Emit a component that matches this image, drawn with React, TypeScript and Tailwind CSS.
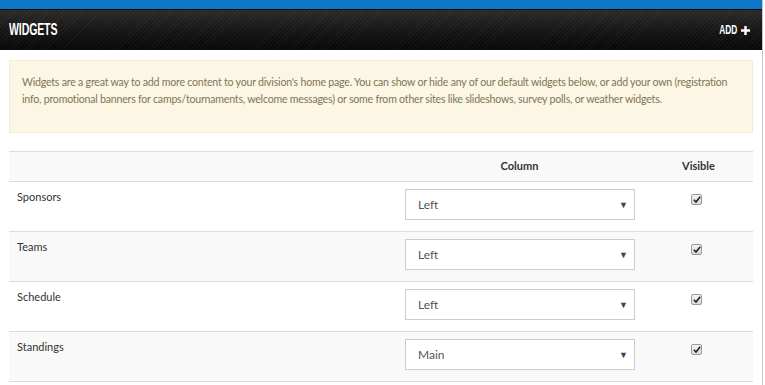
const rows = [
  { name: 'Sponsors', column: 'Left' },
  { name: 'Teams', column: 'Left' },
  { name: 'Schedule', column: 'Left' },
  { name: 'Standings', column: 'Main' },
]

function Check() {
  return (
    <span className="w-[11px] h-[11px] flex items-center justify-center rounded-[2px] border border-[#9a9a9a] bg-[linear-gradient(180deg,#f4f4f4,#d9d9d9)]">
      <svg width="8" height="7" viewBox="0 0 8 7">
        <path d="M0.8 3.8 L3 6 L7.2 0.8" stroke="#222" strokeWidth="1.6" fill="none" />
      </svg>
    </span>
  )
}

export default function App() {
  return (
    <div className="w-[765px] h-[385px] overflow-hidden bg-white font-['Lato','Open_Sans',sans-serif]">
      <div className="w-[763px] h-full border-r border-[#c8c8c8]">
        <div className="h-[9px] bg-[#0a78c6]" />
        <div className="h-[41px] flex items-center justify-between pl-[9px] pr-[12px] bg-[repeating-linear-gradient(135deg,rgba(255,255,255,0.04)_0px,rgba(255,255,255,0.04)_1px,transparent_1px,transparent_3px),linear-gradient(180deg,#2a2a2a_0%,#141414_55%,#070707_100%)] border-t border-[#0b0b0b]">
          <span className="text-white font-bold text-[16px] tracking-[-0.2px] scale-x-[0.66] origin-left font-['Liberation_Sans',sans-serif]">
            WIDGETS
          </span>
          <span className="flex items-center gap-[4px] text-white font-bold">
            <span className="text-[13px] scale-x-[0.64] origin-right font-['Liberation_Sans',sans-serif]">ADD</span>
            <svg width="9" height="9" viewBox="0 0 9 9">
              <path d="M3.3 0h2.4v3.3H9v2.4H5.7V9H3.3V5.7H0V3.3h3.3z" fill="#fff" />
            </svg>
          </span>
        </div>

        <div className="px-[9px] pt-[10px]">
          <div className="h-[73px] bg-[#fcf6e4] border border-[#f5ecd3] px-[12px] pt-[13px] text-[10.6px] tracking-[-0.22px] leading-[17px] text-[#807558] whitespace-nowrap">
            Widgets are a great way to add more content to your division's home page. You can show or hide any of our
            default widgets below, or add your own (registration
            <br />
            info, promotional banners for camps/tournaments, welcome messages) or some from other sites like
            slideshows, survey polls, or weather widgets.
          </div>

          <div className="mt-[18px] border-t border-[#dcdcdc]">
            <div className="h-[30px] flex items-center bg-[#f9f9f9] border-b border-[#dcdcdc] text-[11px] font-bold text-[#333]">
              <div className="w-[386px]" />
              <div className="w-[249px] text-center">Column</div>
              <div className="flex-1 text-center">Visible</div>
            </div>
            {rows.map((row, i) => (
              <div
                key={row.name}
                className={`h-[50px] flex border-b border-[#dcdcdc] ${i % 2 === 1 ? 'bg-[#f9f9f9]' : 'bg-white'}`}
              >
                <div className="w-[386px] pl-[8px] pt-[7px] text-[11px] text-[#333]">{row.name}</div>
                <div className="w-[245px] pl-[10px] pt-[7px]">
                  <div className="w-[230px] h-[31px] bg-white border border-[#ccc] flex items-center justify-between pl-[12px] pr-[6px] text-[12px] text-[#555]">
                    {row.column}
                    <span className="text-[9px] text-[#444]">▼</span>
                  </div>
                </div>
                <div className="flex-1 flex justify-center pt-[12px]">
                  <Check />
                </div>
              </div>
            ))}
          </div>
        </div>
      </div>
    </div>
  )
}
